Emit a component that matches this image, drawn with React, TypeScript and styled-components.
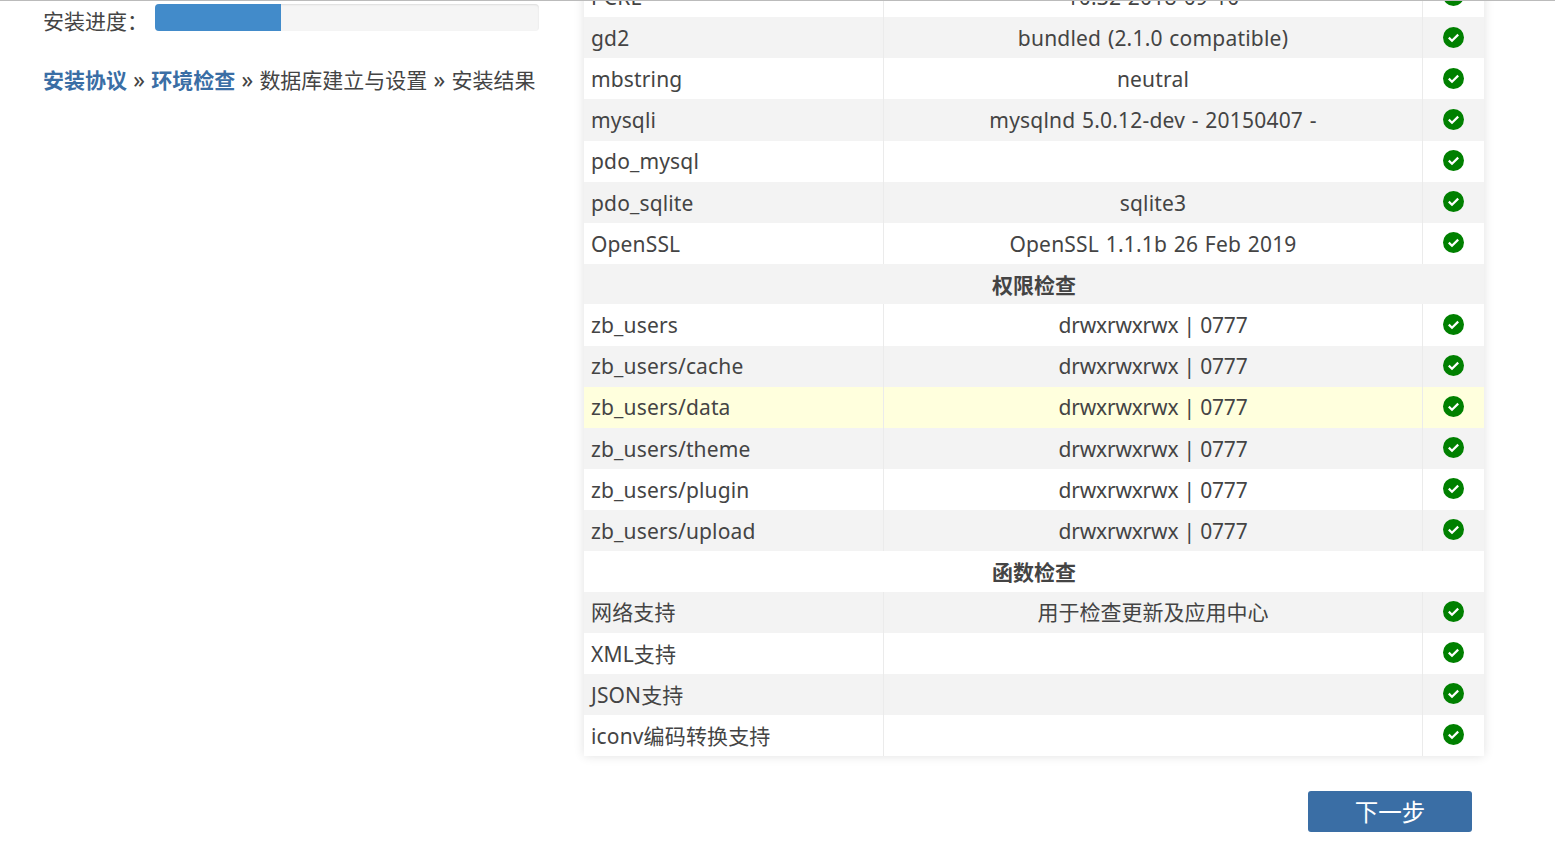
import React from "react";
import styled, { createGlobalStyle, css } from "styled-components";

const GlobalStyle = createGlobalStyle`
  html, body {
    margin: 0;
    padding: 0;
    height: 100%;
    overflow: hidden;
    background: #fff;
  }
  body {
    font-family: "Noto Sans", "Noto Sans CJK SC", sans-serif;
    font-size: 21px;
    color: #444;
  }
`;

type ValueKind = "text" | "perm" | "cjk";
type Row = { name: string; value?: string; kind?: ValueKind };
type Section = { title?: string; rows: Row[] };

const sections: Section[] = [
  {
    rows: [
      { name: "PCRE", value: "10.32 2018-09-10" },
      { name: "gd2", value: "bundled (2.1.0 compatible)" },
      { name: "mbstring", value: "neutral" },
      { name: "mysqli", value: "mysqlnd 5.0.12-dev - 20150407 -" },
      { name: "pdo_mysql" },
      { name: "pdo_sqlite", value: "sqlite3" },
      { name: "OpenSSL", value: "OpenSSL 1.1.1b 26 Feb 2019" },
    ],
  },
  {
    title: "权限检查",
    rows: [
      { name: "zb_users", value: "drwxrwxrwx | 0777", kind: "perm" },
      { name: "zb_users/cache", value: "drwxrwxrwx | 0777", kind: "perm" },
      { name: "zb_users/data", value: "drwxrwxrwx | 0777", kind: "perm" },
      { name: "zb_users/theme", value: "drwxrwxrwx | 0777", kind: "perm" },
      { name: "zb_users/plugin", value: "drwxrwxrwx | 0777", kind: "perm" },
      { name: "zb_users/upload", value: "drwxrwxrwx | 0777", kind: "perm" },
    ],
  },
  {
    title: "函数检查",
    rows: [
      { name: "网络支持", value: "用于检查更新及应用中心", kind: "cjk" },
      { name: "XML支持" },
      { name: "JSON支持" },
      { name: "iconv编码转换支持" },
    ],
  },
];

const HOVER_ROW = "zb_users/data";

const CheckIcon = () => (
  <svg width="21" height="21" viewBox="0 0 21 21" aria-hidden="true">
    <circle cx="10.5" cy="10.5" r="10.5" fill="#008000" />
    <path d="M5.8 10.6 L9 13.7 L15.2 7.6" fill="none" stroke="#fff" strokeWidth="2.2" />
  </svg>
);

export default function App() {
  let index = 0;
  return (
    <Viewport>
      <GlobalStyle />
      <TopLine />
      <Page>
        <Sidebar>
          <ProgressRow>
            <ProgressLabel>安装进度：</ProgressLabel>
            <ProgressTrack>
              <ProgressFill $percent={32.8} />
            </ProgressTrack>
          </ProgressRow>
          <Steps>
            <DoneStep>安装协议</DoneStep>
            <Sep>»</Sep>
            <DoneStep>环境检查</DoneStep>
            <Sep>»</Sep>数据库建立与设置<Sep>»</Sep>安装结果
          </Steps>
        </Sidebar>
        <Main>
          <CheckTable>
            {sections.map((section) => (
              <React.Fragment key={section.title ?? "env"}>
                {section.title && (
                  <TitleRow $striped={index++ % 2 === 1}>{section.title}</TitleRow>
                )}
                {section.rows.map((row) => (
                  <DataRow
                    key={row.name}
                    $striped={index++ % 2 === 1}
                    $active={row.name === HOVER_ROW}
                  >
                    <NameCell>{row.name}</NameCell>
                    <ValueCell $kind={row.kind ?? "text"}>{row.value}</ValueCell>
                    <StatusCell>
                      <CheckIcon />
                    </StatusCell>
                  </DataRow>
                ))}
              </React.Fragment>
            ))}
          </CheckTable>
          <Actions>
            <NextButton type="button">下一步</NextButton>
          </Actions>
        </Main>
      </Page>
    </Viewport>
  );
}

const Viewport = styled.div`
  height: 847px;
  overflow: hidden;
  display: flex;
  flex-direction: column;
`;

const TopLine = styled.div`
  flex: none;
  height: 1px;
  background: #bbb;
  position: relative;
  z-index: 1;
`;

const Page = styled.div`
  display: flex;
  align-items: flex-start;
  padding-left: 43px;
`;

const Sidebar = styled.div`
  flex: none;
  width: 496px;
  padding-top: 3px;
`;

const ProgressRow = styled.div`
  display: flex;
  align-items: flex-start;
  height: 27px;
`;

const ProgressLabel = styled.span`
  flex: none;
  width: 112px;
  margin-top: 2px;
  font-size: 21px;
  line-height: 30px;
`;

const ProgressTrack = styled.div`
  flex: 1;
  height: 27px;
  border-radius: 4px;
  overflow: hidden;
  background: #f5f5f5;
  box-shadow: inset 0 1px 2px rgba(0, 0, 0, 0.1);
`;

const ProgressFill = styled.div<{ $percent: number }>`
  width: ${({ $percent }) => $percent}%;
  height: 100%;
  background: #428bca;
`;

const Steps = styled.div`
  margin-top: 33px;
  font-size: 21px;
  line-height: 30px;
  white-space: nowrap;
`;

const DoneStep = styled.b`
  color: #3a6ea5;
  font-weight: 700;
`;

const Sep = styled.span`
  display: inline-block;
  width: 24.2px;
  text-align: center;
  font-size: 23px;
`;

const Main = styled.div`
  flex: none;
  width: 900px;
  margin-left: 45px;
  margin-top: -24.85px;
`;

const CheckTable = styled.div`
  background: #fff;
  box-shadow: 0 0 10px rgba(0, 0, 0, 0.12);
`;

const DataRow = styled.div<{ $striped: boolean; $active: boolean }>`
  display: grid;
  grid-template-columns: 300px 539px 61px;
  height: 41.1px;
  line-height: 29.1px;
  background: ${({ $striped, $active }) =>
    $active ? "#ffffdd" : $striped ? "#f3f3f3" : "#fff"};
`;

const TitleRow = styled.div<{ $striped: boolean }>`
  height: 40.6px;
  display: flex;
  align-items: center;
  justify-content: center;
  font-weight: 700;
  font-size: 21px;
  background: ${({ $striped }) => ($striped ? "#f3f3f3" : "#fff")};
`;

const NameCell = styled.div`
  display: flex;
  align-items: center;
  padding: 1.8px 0 0 7px;
  border-right: 1px solid #ebebeb;
  letter-spacing: 0.15px;
  white-space: nowrap;
`;

const valueSpacing = {
  text: css`
    letter-spacing: 0.2px;
    word-spacing: 1px;
  `,
  perm: css`
    letter-spacing: -0.2px;
  `,
  cjk: css`
    letter-spacing: 0;
  `,
};

const ValueCell = styled.div<{ $kind: ValueKind }>`
  display: flex;
  align-items: center;
  justify-content: center;
  padding-top: 1.8px;
  border-right: 1px solid #ebebeb;
  white-space: nowrap;
  ${({ $kind }) => valueSpacing[$kind]}
`;

const StatusCell = styled.div`
  display: flex;
  align-items: center;
  justify-content: center;
  padding-bottom: 1.5px;
`;

const Actions = styled.div`
  display: flex;
  justify-content: flex-end;
  padding: 35px 12px 0 0;
`;

const NextButton = styled.button`
  width: 164px;
  height: 41px;
  border: none;
  border-radius: 3px;
  background: #3a6ea5;
  color: #fff;
  font-family: inherit;
  font-size: 23.5px;
  padding: 0;
`;
